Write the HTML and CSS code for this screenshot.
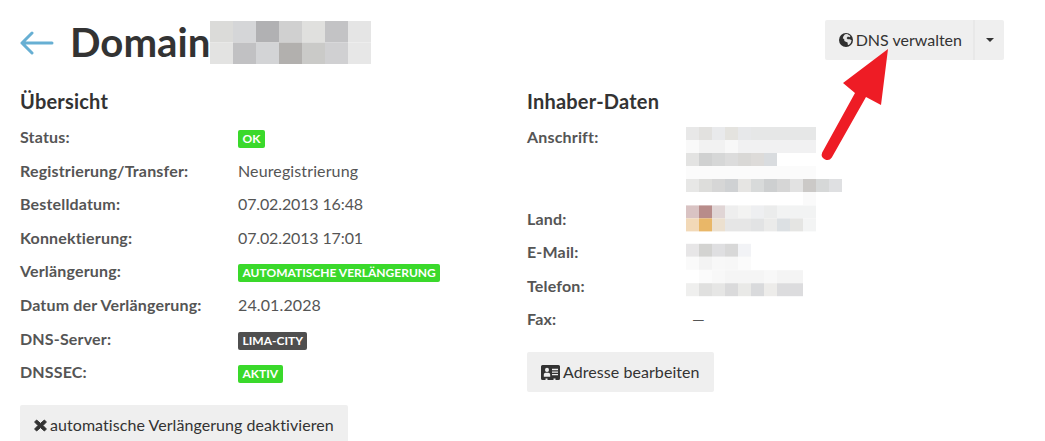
FILE: index.html
```html
<!DOCTYPE html>
<html lang="de">
<head>
<meta charset="utf-8">
<title>Domain</title>
<link rel="stylesheet" href="styles.css">
</head>
<body>
<main class="page">
  <header class="head">
    <svg class="back" width="34" height="24" viewBox="0 0 34 24" aria-hidden="true"><path d="M32 12H2M12 2 2 12l10 10" fill="none" stroke="#67afd3" stroke-width="3" stroke-linecap="round" stroke-linejoin="round"/></svg>
    <h1 class="title">Domain</h1>
    <svg class="title-mosaic" width="161" height="43" aria-hidden="true">
      <rect x="0" y="0" width="23" height="21.5" fill="#dbdbd9"/><rect x="23" y="0" width="23" height="21.5" fill="#d5d6d8"/><rect x="46" y="0" width="23" height="21.5" fill="#b1b1b3"/><rect x="69" y="0" width="23" height="21.5" fill="#d0d0d0"/><rect x="92" y="0" width="23" height="21.5" fill="#e0e0de"/><rect x="115" y="0" width="23" height="21.5" fill="#c3c3c5"/><rect x="138" y="0" width="23" height="21.5" fill="#e5e5e5"/>
      <rect x="0" y="21.5" width="23" height="21.5" fill="#e3e3e2"/><rect x="23" y="21.5" width="23" height="21.5" fill="#c1c1c3"/><rect x="46" y="21.5" width="23" height="21.5" fill="#d3d4d6"/><rect x="69" y="21.5" width="23" height="21.5" fill="#b2b0ae"/><rect x="92" y="21.5" width="23" height="21.5" fill="#cacac8"/><rect x="115" y="21.5" width="23" height="21.5" fill="#d0d0d2"/><rect x="138" y="21.5" width="23" height="21.5" fill="#e7e7e7"/>
    </svg>
    <div class="btn-group">
      <button class="btn btn-main" type="button">
        <svg class="icon" width="14" height="14" viewBox="0 0 14 14" aria-hidden="true"><circle cx="7" cy="7" r="7" fill="#2f2f2f"/><path d="M6 1.200 8.200 1l3.300 2-1 1.200L9 3.600 7.600 5 8.600 6.200H10.800L12.600 7.200 11.800 10 9.800 12 8.800 11.800 8.600 9.600 6.800 8.800 5.400 8 5.200 6.200 3.800 5.200 4.400 3.200Z" fill="#e4e4e4"/></svg>
        DNS verwalten
      </button>
      <button class="btn btn-caret" type="button" aria-label="Menü"><span class="caret"></span></button>
    </div>
  </header>
  <div class="columns">
    <section class="col col-left">
      <h2 class="section-title">Übersicht</h2>
      <dl class="facts facts-left">
        <dt>Status:</dt><dd><span class="badge badge-green">OK</span></dd>
        <dt>Registrierung/Transfer:</dt><dd>Neuregistrierung</dd>
        <dt>Bestelldatum:</dt><dd class="date">07.02.2013 16:48</dd>
        <dt>Konnektierung:</dt><dd class="date">07.02.2013 17:01</dd>
        <dt>Verlängerung:</dt><dd><span class="badge badge-green">Automatische Verlängerung</span></dd>
        <dt>Datum der Verlängerung:</dt><dd>24.01.2028</dd>
        <dt>DNS-Server:</dt><dd><span class="badge badge-dark">Lima-City</span></dd>
        <dt>DNSSEC:</dt><dd><span class="badge badge-green">Aktiv</span></dd>
      </dl>
      <button class="btn btn-action" type="button">
        <svg class="icon" width="13" height="13" viewBox="0 0 13 13" aria-hidden="true"><path d="M2.600 1.000 6.500 4.400 10.400 1.000 12.400 3.000 9.000 6.500 12.400 10.000 10.400 12.000 6.500 8.600 2.600 12.000 .6 10.000 4.000 6.500 .6 3.000Z" fill="#333" stroke="#333" stroke-linejoin="round"/></svg>
        automatische Verlängerung deaktivieren
      </button>
    </section>
    <section class="col col-right">
      <h2 class="section-title">Inhaber-Daten</h2>
      <dl class="facts facts-right">
        <dt>Anschrift:</dt>
        <dd class="tall">
          <svg class="mosaic" width="156" height="72" aria-hidden="true">
            <g transform="translate(0 2)">
              <rect x="0" y="0" width="13" height="13" fill="#e8e8e8"/><rect x="13" y="0" width="13" height="13" fill="#e2e1df"/><rect x="26" y="0" width="13" height="13" fill="#e9eaec"/><rect x="39" y="0" width="13" height="13" fill="#e4e3df"/><rect x="52" y="0" width="13" height="13" fill="#e7e8ea"/><rect x="65" y="0" width="65" height="13" fill="#e6e7e7"/>
              <rect x="0" y="13" width="13" height="13" fill="#f9f9f9"/><rect x="13" y="13" width="26" height="13" fill="#f2f2f2"/><rect x="39" y="13" width="13" height="13" fill="#f8f8f8"/><rect x="52" y="13" width="78" height="13" fill="#f1f1f2"/>
              <rect x="0" y="26" width="13" height="13" fill="#e3e3e2"/><rect x="13" y="26" width="13" height="13" fill="#d0d1d1"/><rect x="26" y="26" width="13" height="13" fill="#d6d7d7"/><rect x="39" y="26" width="13" height="13" fill="#dcdcdc"/><rect x="52" y="26" width="13" height="13" fill="#d9d8d6"/><rect x="65" y="26" width="13" height="13" fill="#dddbd9"/><rect x="78" y="26" width="13" height="13" fill="#d9dcdf"/>
              <rect x="0" y="39" width="130" height="13" fill="#fbfbfb"/>
              <rect x="0" y="52" width="13" height="13" fill="#e7e7e6"/><rect x="13" y="52" width="13" height="13" fill="#dddddb"/><rect x="26" y="52" width="13" height="13" fill="#d6d6d6"/><rect x="39" y="52" width="13" height="13" fill="#cfd1d3"/><rect x="52" y="52" width="13" height="13" fill="#e6e5e3"/><rect x="65" y="52" width="13" height="13" fill="#d8dada"/><rect x="78" y="52" width="13" height="13" fill="#cdcfd0"/><rect x="91" y="52" width="13" height="13" fill="#d6d6d6"/><rect x="104" y="52" width="13" height="13" fill="#e2e2e2"/><rect x="117" y="52" width="13" height="13" fill="#cbc9c7"/><rect x="130" y="52" width="13" height="13" fill="#d6d8d8"/><rect x="143" y="52" width="13" height="13" fill="#dfe0e2"/>
              <rect x="117" y="65" width="13" height="13" fill="#fafafa"/>
            </g>
          </svg>
        </dd>
        <dt>Land:</dt>
        <dd>
          <svg class="mosaic" width="130" height="24" aria-hidden="true">
            <g transform="translate(0 -1.600)">
            <rect x="0" y="0" width="13" height="13" fill="#d9c3c3"/><rect x="13" y="0" width="13" height="13" fill="#b88c8a"/><rect x="26" y="0" width="13" height="13" fill="#e0d5d5"/><rect x="39" y="0" width="13" height="13" fill="#eeeeee"/><rect x="52" y="0" width="13" height="13" fill="#f3f3f2"/><rect x="65" y="0" width="13" height="13" fill="#eeeff1"/><rect x="78" y="0" width="13" height="13" fill="#ebecec"/><rect x="91" y="0" width="39" height="13" fill="#f2f3f3"/>
            <rect x="0" y="13" width="13" height="13" fill="#f2d9b8"/><rect x="13" y="13" width="13" height="13" fill="#e9b768"/><rect x="26" y="13" width="13" height="13" fill="#ece0cf"/><rect x="39" y="13" width="26" height="13" fill="#e6e6e6"/><rect x="65" y="13" width="13" height="13" fill="#e2e3e4"/><rect x="78" y="13" width="13" height="13" fill="#ebebea"/><rect x="91" y="13" width="13" height="13" fill="#dce0e3"/><rect x="104" y="13" width="13" height="13" fill="#e5e5e3"/><rect x="117" y="13" width="13" height="13" fill="#f3f4f4"/>
            </g>
          </svg>
        </dd>
        <dt>E-Mail:</dt>
        <dd>
          <svg class="mosaic" width="65" height="24" aria-hidden="true">
            <g transform="translate(0 3.800)">
            <rect x="0" y="0" width="13" height="13" fill="#e7e6e7"/><rect x="13" y="0" width="13" height="13" fill="#d3d3d1"/><rect x="26" y="0" width="13" height="13" fill="#dfdfe1"/><rect x="39" y="0" width="13" height="13" fill="#d8d8d8"/><rect x="52" y="0" width="13" height="13" fill="#f2f3f6"/>
            <rect x="0" y="13" width="13" height="13" fill="#fafafa"/><rect x="13" y="13" width="13" height="13" fill="#f3f3f3"/><rect x="26" y="13" width="13" height="13" fill="#f8f8f8"/><rect x="39" y="13" width="13" height="13" fill="#f7f7f7"/><rect x="52" y="13" width="13" height="13" fill="#fbfbfb"/>
            </g>
          </svg>
        </dd>
        <dt>Telefon:</dt>
        <dd>
          <svg class="mosaic" width="117" height="24" aria-hidden="true">
            <g transform="translate(0 -3.800)">
            <rect x="13" y="0" width="13" height="13" fill="#fbfbfb"/><rect x="26" y="0" width="13" height="13" fill="#f8f8f8"/><rect x="39" y="0" width="39" height="13" fill="#f5f5f5"/><rect x="78" y="0" width="13" height="13" fill="#f8f8f8"/><rect x="91" y="0" width="26" height="13" fill="#f4f4f4"/>
            <rect x="0" y="13" width="13" height="13" fill="#efefee"/><rect x="13" y="13" width="13" height="13" fill="#e0e0df"/><rect x="26" y="13" width="13" height="13" fill="#e6e6e5"/><rect x="39" y="13" width="13" height="13" fill="#dadadb"/><rect x="52" y="13" width="13" height="13" fill="#e9e9e7"/><rect x="65" y="13" width="13" height="13" fill="#d9dadc"/><rect x="78" y="13" width="13" height="13" fill="#edecea"/><rect x="91" y="13" width="26" height="13" fill="#dcdcde"/>
            </g>
          </svg>
        </dd>
        <dt>Fax:</dt><dd class="dash">—</dd>
      </dl>
      <button class="btn btn-action" type="button">
        <svg class="icon" width="19" height="15" viewBox="0 0 19 14" preserveAspectRatio="none" aria-hidden="true"><path fill-rule="evenodd" d="M1.500 0h16A1.500 1.500 0 0 1 19 1.500v11a1.500 1.500 0 0 1-1.500 1.500h-3v-1.300h-2V14h-6v-1.300h-2V14h-3A1.500 1.500 0 0 1 0 12.500v-11A1.500 1.500 0 0 1 1.500 0ZM6 2.600a2 2 0 1 0 0 4 2 2 0 0 0 0-4ZM2.800 11h6.400V9.300C9.200 8 8.300 7.300 7.400 7.300H4.600C3.700 7.300 2.800 8 2.800 9.300ZM11 3.600v1.200h6V3.600ZM11 6v1.200h6V6ZM11 8.400v1.200h6V8.400Z" fill="#333"/></svg>
        Adresse bearbeiten
      </button>
    </section>
  </div>
</main>
<svg class="annotation" width="70" height="130" viewBox="0 0 70 130" aria-hidden="true">
  <path d="M68 4 23 38 35 48 2.200 107.400A5.500 5.500 0 0 0 11.800 112.600L46 52 61 60Z" fill="#ee1c25"/>
</svg>
</body>
</html>
```
FILE: styles.css
```css
* { box-sizing: border-box; }
html, body { margin: 0; height: 441px; overflow: hidden; background: #fff; }
body { font: 16px/24px Lato, "Open Sans", sans-serif; color: #555; position: relative; }
.page { padding: 20px 41px 0 20px; }
.head { display: flex; align-items: flex-start; height: 44px; }
.back { margin: 11px 16px 0 0; flex: none; }
.title { margin: 0; font-size: 40.200px; line-height: 44px; font-weight: 700; color: #333; }
.title-mosaic { display: block; margin-top: 1px; flex: none; }
.btn-group { margin-left: auto; display: flex; }
.btn { font: inherit; color: #333; background: #efefef; border: 0; border-radius: 2px; height: 40px; padding: 0 14px; cursor: pointer; display: inline-flex; align-items: center; gap: 3px; white-space: nowrap; }
.btn-main { border-radius: 2px 0 0 2px; border-right: 2px solid #e8e8e8; padding-right: 11px; }
.btn-caret { border-radius: 0 2px 2px 0; padding: 0 10px; width: 29px; justify-content: center; }
.btn-action { letter-spacing: .06px; }
.caret { width: 0; height: 0; border: 4px solid transparent; border-top-color: #333; border-bottom: 0; }
.icon { flex: none; }
.columns { display: flex; margin-top: 22px; }
.col-left { width: 507px; flex: none; }
.col-right { flex: 1; }
.section-title { margin: 0 0 9px; font-size: 20px; line-height: 30px; font-weight: 700; color: #333; letter-spacing: .2px; }
.facts { margin: 0 0 21px; display: grid; row-gap: 9.600px; }
.facts-left { grid-template-columns: 218px 1fr; }
.facts-right { grid-template-columns: 159px 1fr; }
.facts dt { font-weight: 700; height: 24px; letter-spacing: .17px; }
.facts dd { margin: 0; height: 24px; letter-spacing: .12px; }
.facts dd.date { letter-spacing: -.13px; }
.facts dd.tall { height: 72px; }
.dash { padding-left: 6px; }
.mosaic { display: block; overflow: visible; }
.badge { display: inline-block; font-size: 12px; line-height: 18px; font-weight: 700; text-transform: uppercase; color: #fff; padding: 0 4.500px; border-radius: 2px; vertical-align: top; margin-top: 5px; letter-spacing: 0; }
.badge-green { background: #3ad92b; }
.badge-dark { background: #4f4f4f; }
.annotation { position: absolute; left: 820px; top: 45px; }
```
